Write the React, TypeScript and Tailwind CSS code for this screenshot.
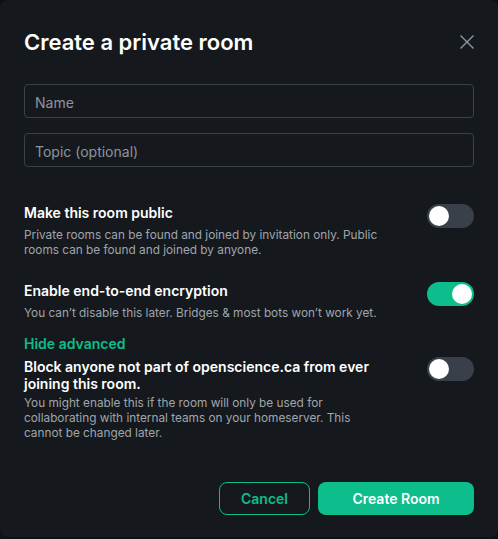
import React, { useState } from "react";

type ToggleProps = { on: boolean; onChange: () => void };

const Toggle = ({ on, onChange }: ToggleProps) => (
  <button
    onClick={onChange}
    className={`relative h-6 w-[47px] shrink-0 rounded-full ${
      on ? "bg-[#0dbd8b]" : "bg-[#394049]"
    }`}
  >
    <span
      className={`absolute top-[2px] h-5 w-5 rounded-full bg-white ${
        on ? "left-[25px]" : "left-[2px]"
      }`}
    />
  </button>
);

export default function App() {
  const [isPublic, setIsPublic] = useState(false);
  const [e2e, setE2e] = useState(true);
  const [block, setBlock] = useState(false);

  return (
    <div className="h-[539px] w-[498px] bg-[#0e1013] font-['Inter',sans-serif]">
      <div className="flex h-[537px] flex-col rounded-lg bg-[#15191e] px-6 pt-[26px]">
        {/* header */}
        <div className="flex items-center justify-between">
          <h1 className="text-[22px] font-semibold leading-8 text-white">
            Create a private room
          </h1>
          <svg width="16" height="16" viewBox="0 0 16 16" className="mr-[-1px] text-[#8d97a5]">
            <path d="M1.5 1.5 L14.5 14.5 M14.5 1.5 L1.5 14.5" stroke="currentColor" strokeWidth="1.4" />
          </svg>
        </div>

        {/* inputs */}
        <div className="mt-[26px] flex flex-col gap-[15px]">
          <input
            placeholder="Name"
            className="h-[34px] rounded border border-[#394049] bg-transparent px-[10px] pt-[2px] text-[14px] text-white placeholder:text-[#8e949b] outline-none"
          />
          <input
            placeholder="Topic (optional)"
            className="h-[34px] rounded border border-[#394049] bg-transparent px-[10px] pt-[2px] text-[14px] text-white placeholder:text-[#8e949b] outline-none"
          />
        </div>

        {/* options */}
        <div className="mt-[36px] flex items-start justify-between">
          <div>
            <div className="text-[14px] font-semibold leading-[20px] text-white">
              Make this room public
            </div>
            <p className="mt-[5px] w-[370px] text-[11.8px] leading-[15px] text-[#a0a5ab]">
              Private rooms can be found and joined by invitation only. Public rooms can be found and joined by anyone.
            </p>
          </div>
          <div className="mt-[1px]">
            <Toggle on={isPublic} onChange={() => setIsPublic(!isPublic)} />
          </div>
        </div>

        <div className="mt-[23px] flex items-start justify-between">
          <div>
            <div className="text-[14px] font-semibold leading-[20px] text-white">
              Enable end-to-end encryption
            </div>
            <p className="mt-[5px] text-[11.8px] leading-[15px] text-[#a0a5ab]">
              You can’t disable this later. Bridges &amp; most bots won’t work yet.
            </p>
          </div>
          <div className="mt-[1px]">
            <Toggle on={e2e} onChange={() => setE2e(!e2e)} />
          </div>
        </div>

        <div className="mt-[13px] text-[14px] font-semibold leading-[20px] text-[#0dbd8b]">
          Hide advanced
        </div>

        <div className="mt-[4px] flex items-start justify-between">
          <div>
            <div className="w-[380px] text-[14px] font-semibold leading-[17px] text-white">
              Block anyone not part of openscience.ca from ever joining this room.
            </div>
            <p className="mt-[4px] w-[340px] text-[11.8px] leading-[15px] text-[#a0a5ab]">
              You might enable this if the room will only be used for collaborating with internal teams on your homeserver. This cannot be changed later.
            </p>
          </div>
          <div className="mt-[-1px]">
            <Toggle on={block} onChange={() => setBlock(!block)} />
          </div>
        </div>

        {/* footer */}
        <div className="mt-auto mb-[22px] flex justify-end gap-2">
          <button className="h-[33px] w-[91px] rounded-lg border border-[#0dbd8b] text-[14px] font-semibold text-[#0dbd8b]">
            Cancel
          </button>
          <button className="h-[33px] w-[156px] rounded-lg bg-[#0dbd8b] text-[14px] font-semibold text-white">
            Create Room
          </button>
        </div>
      </div>
    </div>
  );
}
